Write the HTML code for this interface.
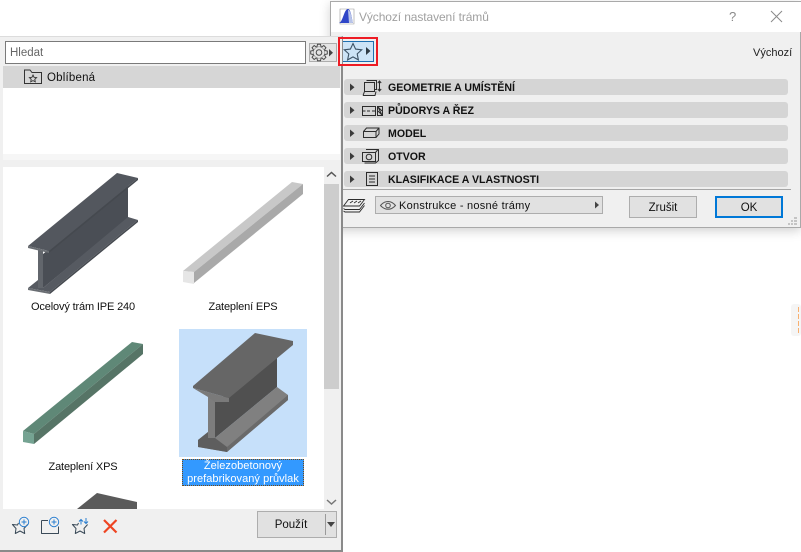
<!DOCTYPE html>
<html><head><meta charset="utf-8"><style>
html,body{margin:0;padding:0;background:#fff}
body{width:801px;height:552px;overflow:hidden;position:relative;font-family:"Liberation Sans","DejaVu Sans",sans-serif;font-size:11.5px;color:#111}
div{position:absolute;box-sizing:border-box}
.bar{left:344px;width:444px;height:16px;background:#d5d5d5;border-radius:3px}
.lbl{left:388px;font-weight:bold;font-size:10.6px;line-height:18px;color:#111;white-space:nowrap}
.btn{background:#e1e1e1;border:1px solid #adadad;text-align:center}
.cap{text-align:center;white-space:nowrap;line-height:16px;font-size:11px;letter-spacing:-.15px}
svg{position:absolute;left:0;top:0}
</style></head><body>
<div style="left:791px;top:304px;width:10px;height:32px;background:#f5f5f5;border-radius:3px"></div>
<div style="left:798px;top:307px;width:1px;height:27px;background:repeating-linear-gradient(#f8b070 0 5px,transparent 5px 7px)"></div>

<!-- dialog -->
<div style="left:330px;top:1px;width:471px;height:227px;background:#f0f0f0;border:1px solid #a9a9a9;box-shadow:0 3px 10px rgba(0,0,0,.18)"></div>
<div style="left:331px;top:2px;width:470px;height:30px;background:#fff"></div>
<div style="left:359px;top:10px;font-size:12px;line-height:15px;color:#a0a0a0;letter-spacing:-.1px">Výchozí nastavení trámů</div>
<div style="left:729px;top:9px;font-size:13px;color:#8a8a8a">?</div>
<div style="left:753px;top:46px;font-size:11px;line-height:14px;color:#222">Výchozí</div>
<div style="left:342px;top:41px;width:32px;height:21px;background:#cde4f7;border:1px solid #1e6fb0"></div>
<div class="bar" style="top:79px"></div><div class="lbl" style="top:79px">GEOMETRIE A UMÍSTĚNÍ</div>
<div class="bar" style="top:102px"></div><div class="lbl" style="top:102px">PŮDORYS A ŘEZ</div>
<div class="bar" style="top:125px"></div><div class="lbl" style="top:125px">MODEL</div>
<div class="bar" style="top:148px"></div><div class="lbl" style="top:148px">OTVOR</div>
<div class="bar" style="top:171px"></div><div class="lbl" style="top:171px">KLASIFIKACE A VLASTNOSTI</div>
<div style="left:343px;top:189px;width:448px;height:1px;background:#a6a6a6"></div>
<div class="btn" style="left:375px;top:196px;width:228px;height:18px"></div>
<div style="left:399px;top:199px;font-size:11px;line-height:14px;letter-spacing:.25px">Konstrukce - nosné trámy</div>
<div class="btn" style="left:629px;top:196px;width:68px;height:22px;font-size:11.5px;line-height:22px">Zrušit</div>
<div class="btn" style="left:715px;top:196px;width:68px;height:22px;border:2px solid #0078d7;font-size:11.5px;line-height:20px">OK</div>

<!-- left panel -->
<div style="left:0;top:36px;width:343px;height:516px;background:#f0f0f0;border-top:1px solid #dcdcdc;border-right:2px solid #8a8a8a;border-bottom:2px solid #8a8a8a"></div>
<div style="left:338px;top:37px;width:40px;height:29px;border:2px solid #ee1c25"></div>
<div style="left:340px;top:39px;width:2px;height:25px;background:#f0f0f0"></div>
<div style="left:5px;top:41px;width:301px;height:23px;background:#fff;border:1px solid #7a7a7a;padding-left:4px;font-size:11.5px;line-height:23px;color:#666">Hledat</div>
<div class="btn" style="left:309px;top:43px;width:28px;height:19px;background:#e4e4e4"></div>
<div style="left:3px;top:66px;width:337px;height:22px;background:#d6d6d6"></div>
<div style="left:47px;top:71px;font-size:11.5px;line-height:14px;letter-spacing:.2px">Oblíbená</div>
<div style="left:3px;top:88px;width:337px;height:66px;background:#fff"></div>
<div style="left:3px;top:154px;width:337px;height:6px;background:#f6f6f6"></div>
<div style="left:3px;top:167px;width:321px;height:342px;background:#fff"></div>
<div style="left:324px;top:184px;width:15px;height:205px;background:#cdcdcd"></div>
<div style="left:179px;top:329px;width:128px;height:128px;background:#c6e0fa"></div>
<div class="cap" style="left:3px;top:299px;width:160px">Ocelový trám IPE 240</div>
<div class="cap" style="left:163px;top:299px;width:160px">Zateplení EPS</div>
<div class="cap" style="left:3px;top:459px;width:160px">Zateplení XPS</div>
<div class="cap" style="left:182px;top:459px;width:122px;height:27px;background:#3399ff;color:#fff;border:1px dotted #7a4a10;line-height:13px;letter-spacing:.05px">Železobetonový<br>prefabrikovaný průvlak</div>
<div class="btn" style="left:257px;top:511px;width:80px;height:27px"></div>
<div style="left:325px;top:514px;width:1px;height:21px;background:#9a9a9a"></div>
<div style="left:257px;top:512px;width:68px;text-align:center;font-size:11.5px;line-height:27px">Použít</div>

<svg width="801" height="552" viewBox="0 0 801 552" fill="none">
<!-- IPE -->
<path d="M43 254L128 186V218L43 288Z" fill="#4a4e55"/>
<path d="M38 249L43 250V288H38Z" fill="#62666c"/>
<path d="M28 288L38 280V288H43L128 217L138 220L50 292Z" fill="#565a61"/>
<path d="M28 288L50 292V294L28 290Z" fill="#6a6e73"/>
<path d="M50 292L138 220V222L50 294Z" fill="#45494f"/>
<path d="M117 173L138 178L49 251L28 246Z" fill="#53575e"/>
<path d="M28 246L49 251V253L28 248Z" fill="#6a6e73"/>
<path d="M49 251L138 178V180L49 253Z" fill="#45494f"/>
<!-- EPS -->
<path d="M183 271L292 182L303 184L194 272Z" fill="#c8c8c8"/>
<path d="M194 272L303 184V194L194 283Z" fill="#a9a9a9"/>
<path d="M183 271L194 272V284L183 282Z" fill="#e6e6e6"/>
<!-- XPS -->
<path d="M23 431L132 342L143 344L34 434Z" fill="#5f8877"/>
<path d="M34 434L143 344V354L34 444Z" fill="#567466"/>
<path d="M23 431L34 434V444L23 442Z" fill="#75a392"/>
<!-- concrete -->
<path d="M215 402L277 357V387L215 438Z" fill="#505050"/>
<path d="M208 397H215V438H208Z" fill="#7d7d7d"/>
<path d="M198 440L208 432V438H215L277 387L288 395V400L227 452L198 447Z" fill="#808080"/>
<path d="M198 440L208 432V438L215 438L227 447V452L198 447Z" fill="#5e5e5e"/>
<path d="M227 447L288 395V400L227 452Z" fill="#6a6a6a"/>
<path d="M193 388L229 398V402H215L208 397Z" fill="#7a7a7a"/>
<path d="M255 333L293 341V345L229 398L193 388V386Z" fill="#666"/>
<!-- partial -->
<path d="M77 509L97 493L137 502V509Z" fill="#5a5a5a"/>

<!-- dialog icons -->
<path d="M340 24V9h14v15z" fill="#fff" stroke="#9a9a9a" stroke-width=".6"/>
<path d="M339 23C343 22 344 9 348 9C351 9 352 20 353 23Z" fill="#2f46c8"/>
<path d="M348 10C351 10 352 20 353 23H349Z" fill="#b8c4e8"/>
<path d="M771 11L782 22M782 11L771 22" stroke="#8a8a8a" stroke-width="1"/>
<path d="M353 43.500l2.600 5.600 6.100.7-4.500 4.100 1.200 6-5.400-3-5.400 3 1.200-6-4.500-4.100 6.100-.7z" stroke="#3d5366" stroke-width="1.100"/>
<path d="M366 47v8l4.500-4z" fill="#2f3b45"/>
<g fill="#3a3a3a"><path d="M350 83.500v7.500l4.500-3.700z"/><path d="M350 106.500v7.500l4.500-3.700z"/><path d="M350 129.500v7.500l4.500-3.700z"/><path d="M350 152.500v7.500l4.500-3.700z"/><path d="M350 175.500v7.500l4.500-3.700z"/></g>
<g stroke="#2c2c2c" stroke-width="1">
<path d="M364.500 82.500h10v9h-10zM366.500 80.500h10v9h-2M363 95.500h12l1-4M363 95.500l1.500-4"/>
<path d="M379.500 81.500v9M377.800 83l1.700-2 1.700 2M377.800 89l1.700 2 1.700-2"/>
<path d="M362.500 106.500h13v9h-13zM362.500 111h3M367 111h3M372 111h3"/>
<path d="M377.500 106.500h5v9h-5zM378 107l4 8M378 111l4 4M378 107l4 4"/>
<path d="M363.500 131.500l3-3.500h12.500v6l-3 3.500h-12.500zM363.500 131.500h12.500v6M376 131.500l3-3.500"/>
<path d="M362.500 152.500h13v9h-13zM375.500 152.500l2.500-3h-12M378.500 149.500v11l-3 2.500h-11"/>
<circle cx="369" cy="157" r="2.800"/>
<path d="M366.500 172.500h11v13h-11zM369 176h6M369 179h6M369 182h6"/>
<path d="M343.500 206l5-6.500h16l-5 6.500zM343.500 208.500l1.500 1h14.500l5-6.500M343.500 211l1.500 1h14.500l5-6.500M350 203l3-2M354 203l3-2M358 203l3-2" stroke-width=".9"/>
</g>
<path d="M380.500 205.500c2.500-3 5-4 7.500-4s5 1 7.500 4c-2.500 2.800-5 3.800-7.500 3.800s-5-1-7.500-3.800z" stroke="#555" stroke-width="1"/>
<circle cx="388" cy="205.500" r="2.300" stroke="#555"/>
<path d="M595 201.500v7l4-3.500z" fill="#444"/>
<g fill="#c4c4c4"><rect x="794" y="217" width="3" height="2"/><rect x="791" y="220" width="2" height="2"/><rect x="794" y="220" width="3" height="2"/><rect x="788" y="223" width="2" height="2"/><rect x="791" y="223" width="2" height="2"/><rect x="794" y="223" width="3" height="2"/></g>

<!-- panel icons -->
<g stroke="#4a4a4a" stroke-width="1" fill="#e4e4e4" transform="translate(319 52.500)">
<circle r="6"/>
<path d="M-2-5.800L-1.500-8.300H1.500L2-5.800"/>
<path d="M-2-5.800L-1.500-8.300H1.500L2-5.800" transform="rotate(45)"/>
<path d="M-2-5.800L-1.500-8.300H1.500L2-5.800" transform="rotate(90)"/>
<path d="M-2-5.800L-1.500-8.300H1.500L2-5.800" transform="rotate(135)"/>
<path d="M-2-5.800L-1.500-8.300H1.500L2-5.800" transform="rotate(180)"/>
<path d="M-2-5.800L-1.500-8.300H1.500L2-5.800" transform="rotate(225)"/>
<path d="M-2-5.800L-1.500-8.300H1.500L2-5.800" transform="rotate(270)"/>
<path d="M-2-5.800L-1.500-8.300H1.500L2-5.800" transform="rotate(315)"/>
<circle r="2.800"/>
</g>
<path d="M329 49v7.500l4-3.700z" fill="#444"/>
<path d="M24.500 72V83.500h17V72.500h-9.500l-2-2.500h-5.500z" stroke="#333" stroke-width="1"/>
<path d="M33 75l1.100 2.300 2.500.3-1.800 1.700.5 2.500-2.300-1.200-2.300 1.200.5-2.500-1.800-1.700 2.500-.3z" stroke="#333" stroke-width=".9"/>
<path d="M327 176.500l4.500-4 4.500 4" stroke="#555" stroke-width="1.500"/>
<path d="M327 500l4.500 4 4.500-4" stroke="#777" stroke-width="1.500"/>

<!-- bottom icons -->
<g stroke="#3a4a58" stroke-width="1" stroke-linejoin="round">
<path d="M18.500 523L17.500 525L12.400 524.500L16 528.500L15.300 533.500L20 531L24.700 533.500L24 528.500L27.600 524.500"/>
<path d="M41.500 520.500v13h17v-7M41.500 520.500h6.500"/>
<path d="M78.500 523L77.500 525L72.400 524.500L76 528.500L75.300 533.500L80 531L84.700 533.500L84 528.500L87.600 524.500"/>
</g>
<g stroke="#2b7fd0" stroke-width="1">
<circle cx="24" cy="522" r="4.700"/><path d="M21.500 522h5M24 519.500v5"/>
<circle cx="54" cy="522" r="4.700"/><path d="M51.500 522h5M54 519.500v5"/>
<path d="M81 524.500v-5M79 521.500l2-2 2 2M86 518v5M84 521.500l2 2 2-2"/>
</g>
<path d="M104 520l12.500 12.500M116.500 520l-12.500 12.500" stroke="#ee4422" stroke-width="2.200"/>
<path d="M327 522h8l-4 5z" fill="#444"/>
</svg>
</body></html>
